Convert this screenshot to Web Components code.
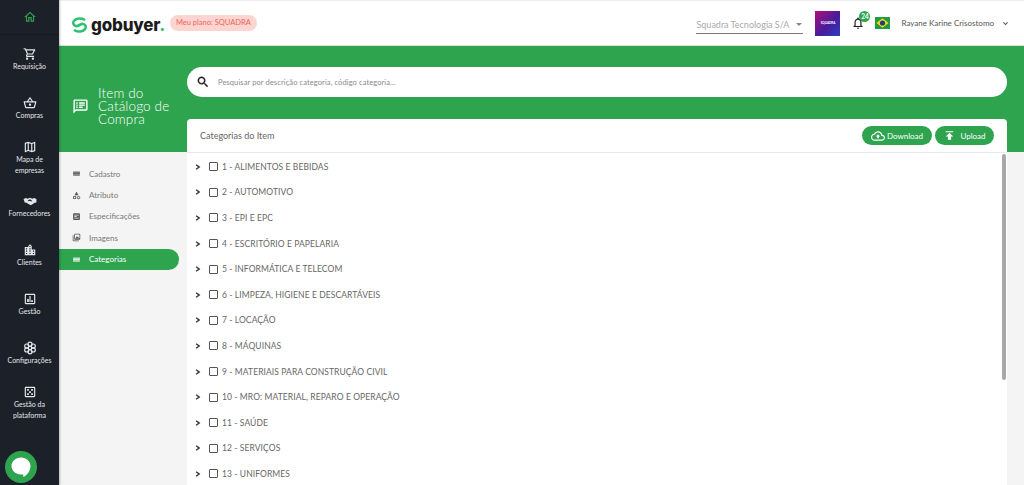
<!DOCTYPE html>
<html lang="pt">
<head>
<meta charset="utf-8">
<title>gobuyer</title>
<style>
    html, body {
        margin: 0;
        padding: 0;
        height: 485px;
        overflow: hidden;
        background: #f4f4f4;
        font-family: 'Lato', 'Open Sans', sans-serif;
    }
    .app {
        display: flex;
        height: 485px;
    }
    .main {
        flex: 1;
        min-width: 0;
        display: flex;
        flex-direction: column;
    }
</style>
</head>
<body>
<div class="app">
    <side-bar></side-bar>
    <div class="main">
        <top-bar></top-bar>
        <work-space></work-space>
    </div>
</div>
<chat-button></chat-button>

<script>
const ICONS = {
    home: '<path d="M12 5.69l5 4.5V18h-2v-6H9v6H7v-7.81l5-4.5M12 3L2 12h3v8h6v-6h2v6h6v-8h3L12 3z"/>',
    cart: '<path d="M15.55 13c.75 0 1.41-.41 1.75-1.03l3.58-6.49c.37-.66-.11-1.48-.87-1.48H5.21l-.94-2H1v2h2l3.6 7.59-1.35 2.44C4.52 15.37 5.48 17 7 17h12v-2H7l1.1-2h7.45zM6.16 6h12.15l-2.76 5H8.53L6.16 6zM7 18c-1.1 0-1.99.9-1.99 2S5.9 22 7 22s2-.9 2-2-.9-2-2-2zm10 0c-1.1 0-1.99.9-1.99 2s.89 2 1.99 2 2-.9 2-2-.9-2-2-2z"/>',
    basket: '<path d="M22 9h-4.79l-4.38-6.56c-.19-.28-.51-.42-.83-.42s-.64.14-.83.43L6.79 9H2c-.55 0-1 .45-1 1 0 .09.01.18.04.27l2.54 9.27c.23.84 1 1.46 1.92 1.46h13c.92 0 1.69-.62 1.93-1.46l2.54-9.27L23 10c0-.55-.45-1-1-1zM12 4.8L14.8 9H9.2L12 4.8zM18.5 19l-12.99.01L3.31 11H20.7l-2.2 8zM12 13c-1.1 0-2 .9-2 2s.9 2 2 2 2-.9 2-2-.9-2-2-2z"/>',
    map: '<path d="M20.5 3l-.16.03L15 5.1 9 3 3.36 4.9c-.21.07-.36.25-.36.48V20.5c0 .28.22.5.5.5l.16-.03L9 18.9l6 2.1 5.64-1.9c.21-.07.36-.25.36-.48V3.5c0-.28-.22-.5-.5-.5zM10 5.47l4 1.4v11.66l-4-1.4V5.47zm-5 .99l3-1.01v11.7l-3 1.16V6.46zm14 11.08l-3 1.01V6.86l3-1.16v11.84z"/>',
    hands: '<path d="M1 8.500 5 7l3 1 4-1.500 4 1.500 3-1 4 1.500v6l-3 .5-5 3.500-2 .5-3-1.500-4-2.500-3-.5z"/><path d="M8 11l4-2 4 3-2 1-2-1.500-2 1z" fill="#1c2029"/>',
    city: '<path d="M15 11V5l-3-3-3 3v2H3v14h18V11h-6zm-8 8H5v-2h2v2zm0-4H5v-2h2v2zm0-4H5V9h2v2zm6 8h-2v-2h2v2zm0-4h-2v-2h2v2zm0-4h-2V9h2v2zm0-4h-2V5h2v2zm6 12h-2v-2h2v2zm0-4h-2v-2h2v2z"/>',
    chart: '<path d="M19 3H5c-1.100 0-2 .9-2 2v14c0 1.100.9 2 2 2h14c1.100 0 2-.9 2-2V5c0-1.100-.9-2-2-2zm0 16H5V5h14v14zM7 12h3v5H7zm4-5h2v10h-2zm3 7h3v3h-3z"/>',
    gear: '<g fill="none" stroke="currentColor" stroke-width="2"><circle cx="12" cy="12" r="3"/><circle cx="12" cy="5.500" r="3.500"/><circle cx="12" cy="18.500" r="3.500"/><circle cx="6.400" cy="8.700" r="3.500"/><circle cx="17.600" cy="8.700" r="3.500"/><circle cx="6.400" cy="15.300" r="3.500"/><circle cx="17.600" cy="15.300" r="3.500"/></g>',
    platform: '<path d="M19 3H5c-1.100 0-2 .9-2 2v14c0 1.100.9 2 2 2h14c1.100 0 2-.9 2-2V5c0-1.100-.9-2-2-2zm0 16H5V5h14v14zM7 7h3v3H7zm7 0h3v3h-3zM7 14h3v3H7zm7 0h3v3h-3zm-3.500-3.500h3v3h-3z"/>',
    lines: '<path d="M3 7h18v2H3zm0 4h18v2H3zm0 4h18v2H3z"/><path d="M3 7h18v10H3z" opacity=".55"/>',
    category: '<path d="M12 2l-5.500 9h11L12 2zM17.500 13c-2.490 0-4.500 2.010-4.500 4.500s2.010 4.500 4.500 4.500 4.500-2.010 4.500-4.500-2.010-4.500-4.500-4.500zm0 7c-1.380 0-2.500-1.120-2.500-2.500s1.120-2.500 2.500-2.500 2.500 1.120 2.500 2.500-1.120 2.500-2.500 2.500zM3 21.500h8v-8H3v8zm2-6h4v4H5v-4z"/>',
    spec: '<path d="M19 3H5c-1.100 0-2 .9-2 2v14c0 1.100.9 2 2 2h14c1.100 0 2-.9 2-2V5c0-1.100-.9-2-2-2zM6 7h12v2H6zm0 4h7v2H6zm0 4h12v2H6z" fill-rule="evenodd"/>',
    photos: '<path d="M22 16V4c0-1.100-.9-2-2-2H8c-1.100 0-2 .9-2 2v12c0 1.100.9 2 2 2h12c1.100 0 2-.9 2-2zm-2-2H8V4h12v10zM2 6v14c0 1.100.9 2 2 2h14v-2H4V6H2z"/><path d="M10 13l3-5 2 3 1.500-1.500L18 13z"/>',
    search: '<path d="M15.500 14h-.79l-.28-.27C15.410 12.590 16 11.110 16 9.500 16 5.910 13.090 3 9.500 3S3 5.910 3 9.500 5.910 16 9.500 16c1.610 0 3.090-.59 4.230-1.570l.27.28v.79l5 4.990L20.490 19l-4.990-5zm-6 0C7.010 14 5 11.990 5 9.500S7.010 5 9.500 5 14 7.010 14 9.500 11.990 14 9.500 14z" stroke="currentColor" stroke-width=".6"/>',
    bell: '<path d="M12 22c1.100 0 2-.9 2-2h-4c0 1.100.9 2 2 2zm6-6v-5c0-3.070-1.630-5.640-4.500-6.320V4c0-.83-.67-1.500-1.500-1.500s-1.500.67-1.500 1.500v.68C7.640 5.360 6 7.920 6 11v5l-2 2v1h16v-1l-2-2zm-2 1H8v-6c0-2.480 1.510-4.500 4-4.500s4 2.020 4 4.500v6z"/>',
    cloud: '<path d="M19.350 10.040C18.670 6.590 15.640 4 12 4 9.110 4 6.600 5.640 5.350 8.040 2.340 8.360 0 10.910 0 14c0 3.310 2.690 6 6 6h13c2.760 0 5-2.240 5-5 0-2.640-2.050-4.780-4.650-4.960zM19 18H6c-2.210 0-4-1.790-4-4 0-2.050 1.530-3.760 3.560-3.970l1.070-.11.5-.95C8.080 7.140 9.940 6 12 6c2.620 0 4.880 1.860 5.390 4.430l.3 1.500 1.530.11c1.560.1 2.780 1.410 2.780 2.960 0 1.650-1.350 3-3 3zM8 13h2.550v3h2.900v-3H16l-4-4z"/>',
    publish: '<path d="M5 4v2h14V4H5zm0 10h4v6h6v-6h4l-7-7-7 7z"/>',
    note: '<path d="M20 2H4c-1.100 0-2 .9-2 2v18l4-4h14c1.100 0 2-.9 2-2V4c0-1.100-.9-2-2-2zm0 14H5.170L4 17.170V4h16v12zM6 12h2v2H6zm0-3h2v2H6zm0-3h2v2H6zm4 6h5v2h-5zm0-3h8v2h-8zm0-3h8v2h-8z"/>'
};

function icon(name, size) {
    return `<svg viewBox="0 0 24 24" width="${size}" height="${size}" fill="currentColor" aria-hidden="true">${ICONS[name]}</svg>`;
}

class SideBar extends HTMLElement {
    constructor() {
        super();
        this.attachShadow({ mode: 'open' });
    }

    connectedCallback() {
        const items = [
            { label: 'Requisição', icon: 'cart' },
            { label: 'Compras', icon: 'basket' },
            { label: 'Mapa de<br>empresas', icon: 'map' },
            { label: 'Fornecedores', icon: 'hands' },
            { label: 'Clientes', icon: 'city' },
            { label: 'Gestão', icon: 'chart' },
            { label: 'Configurações', icon: 'gear' },
            { label: 'Gestão da<br>plataforma', icon: 'platform' }
        ];
        let itemsHTML = '';
        for (let item of items) {
            itemsHTML += `<a class="item">${icon(item.icon, 14)}<span>${item.label}</span></a>`;
        }
        this.shadowRoot.innerHTML = `
        <style>
            :host {
                display: flex;
                flex-direction: column;
                flex: none;
                width: 59px;
                background-color: #1c2029;
                color: #e4e6ea;
                box-shadow: 1px 0 2px rgba(0, 0, 0, .25);
                z-index: 2;
            }
            .home {
                display: flex;
                align-items: center;
                justify-content: center;
                height: 35px;
                border-bottom: 1px solid #171a22;
                box-sizing: border-box;
                color: #2ea44f;
            }
            .item {
                display: flex;
                flex-direction: column;
                align-items: center;
                justify-content: center;
                height: 49px;
                font-size: 7px;
                line-height: 10.500px;
                text-align: center;
                white-space: nowrap;
            }
        </style>
        <div class="home">${icon('home', 14)}</div>
        ${itemsHTML}
        `;
    }
}

class TopBar extends HTMLElement {
    constructor() {
        super();
        this.attachShadow({ mode: 'open' });
    }

    connectedCallback() {
        this.shadowRoot.innerHTML = `
        <style>
            :host {
                display: flex;
                align-items: center;
                flex: none;
                height: 46px;
                box-sizing: border-box;
                padding: 0 15px 0 12px;
                background-color: #fff;
                border-top: 1px solid #eee;
                border-bottom: 1px solid #dcdcdc;
                color: #666;
            }
            .logo {
                display: flex;
                align-items: center;
                gap: 3px;
                margin-top: 3px;
                font-family: 'Inter', sans-serif;
                font-size: 17px;
                font-weight: 800;
                letter-spacing: -.2px;
                color: #1b1b1b;
            }
            .logo b { color: #2fc274; font-weight: 800; }
            .plan {
                margin-left: 5px;
                padding: 0 6px;
                height: 16px;
                line-height: 16px;
                border-radius: 8px;
                background-color: #fdd5d0;
                color: #e9645c;
                font-size: 7.500px;
            }
            .spacer { flex: 1; }
            .company {
                display: flex;
                align-items: center;
                justify-content: space-between;
                box-sizing: border-box;
                width: 107px;
                height: 22px;
                padding-top: 3px;
                border-bottom: 1px solid #777;
                color: #aaa;
                font-size: 9px;
            }
            .company i {
                width: 0;
                height: 0;
                margin-right: 1px;
                border: 3px solid transparent;
                border-top: 3px solid #888;
                border-bottom: 0;
            }
            .brand {
                display: flex;
                align-items: center;
                justify-content: center;
                width: 25px;
                height: 25px;
                margin-left: 12px;
                background: linear-gradient(135deg, #b0107a 0%, #4a1a9c 55%, #2a3fc0 100%);
                color: #fff;
                font-size: 3px;
                font-weight: 700;
            }
            .bell {
                position: relative;
                display: flex;
                margin: -1px 0 0 11px;
                color: #222;
            }
            .badge {
                position: absolute;
                top: -5px;
                left: 8px;
                width: 11px;
                height: 11px;
                line-height: 11px;
                border-radius: 50%;
                background-color: #2ea44f;
                color: #fff;
                font-size: 6.500px;
                font-weight: 700;
                text-align: center;
            }
            .flag { display: block; margin-left: 10px; }
            .user {
                margin-left: 11px;
                font-size: 8px;
                color: #555;
            }
            .caret { display: flex; margin-left: 8px; color: #555; }
        </style>
        <div class="logo">
            <svg viewBox="0 0 18 18" width="17" height="18" fill="none" stroke="#2fc274" stroke-width="2.700" stroke-linecap="round" stroke-linejoin="round">
                <path d="M14 3.200C11 1.500 5 1.500 2.800 5 1.500 7.500 3 10 6 10.300L9 9"/>
                <path d="M4 14.800c3 1.700 9 1.700 11.200-1.800 1.300-2.500-.2-5-3.200-5.300L9 9"/>
            </svg>
            <span>gobuyer<b>.</b></span>
        </div>
        <span class="plan">Meu plano: SQUADRA</span>
        <span class="spacer"></span>
        <div class="company"><span>Squadra Tecnologia S/A</span><i></i></div>
        <div class="brand">SQUADRA</div>
        <div class="bell">${icon('bell', 14)}<span class="badge">24</span></div>
        <svg class="flag" viewBox="0 0 15 12" width="15" height="12">
            <rect width="15" height="12" fill="#1f9a45"/>
            <path d="M7.500 1.300 13.700 6 7.500 10.700 1.300 6z" fill="#f5d90a"/>
            <circle cx="7.500" cy="6" r="2.600" fill="#1d3f8f"/>
        </svg>
        <span class="user">Rayane Karine Crisostomo</span>
        <span class="caret"><svg viewBox="0 0 10 10" width="7" height="7" fill="none" stroke="currentColor" stroke-width="1.500"><path d="M2 3.500l3 3 3-3"/></svg></span>
        `;
    }
}

class WorkSpace extends HTMLElement {
    constructor() {
        super();
        this.attachShadow({ mode: 'open' });
    }

    connectedCallback() {
        this.shadowRoot.innerHTML = `
        <style>
            :host {
                display: flex;
                flex: 1;
                min-height: 0;
                background: linear-gradient(#2ea44f 106px, #f4f4f4 106px);
            }
            .left {
                flex: none;
                width: 128px;
            }
            .title {
                display: flex;
                align-items: center;
                gap: 9px;
                box-sizing: border-box;
                height: 106px;
                padding: 14px 0 0 13px;
                color: #fff;
            }
            .title svg { flex: none; }
            .title h1 {
                margin: 0;
                font-size: 13.500px;
                font-weight: 300;
                line-height: 13px;
                letter-spacing: .15px;
            }
            .right {
                flex: 1;
                min-width: 0;
                display: flex;
                flex-direction: column;
                gap: 22px;
                padding: 21px 17px 0 0;
            }
        </style>
        <div class="left">
            <div class="title">${icon('note', 17)}<h1>Item do Catálogo de Compra</h1></div>
            <side-nav></side-nav>
        </div>
        <div class="right">
            <search-box placeholder="Pesquisar por descrição categoria, código categoria..."></search-box>
            <category-card></category-card>
        </div>
        `;
    }
}

class SideNav extends HTMLElement {
    constructor() {
        super();
        this.attachShadow({ mode: 'open' });
    }

    connectedCallback() {
        const links = [
            { name: 'Cadastro', icon: 'lines' },
            { name: 'Atributo', icon: 'category' },
            { name: 'Especificações', icon: 'spec' },
            { name: 'Imagens', icon: 'photos' },
            { name: 'Categorias', icon: 'lines', active: true }
        ];
        let linksHTML = '';
        for (let link of links) {
            linksHTML += `<a class="link ${link.active ? 'active' : ''}">${icon(link.icon, 9)}<span>${link.name}</span></a>`;
        }
        this.shadowRoot.innerHTML = `
        <style>
            :host {
                display: block;
                padding: 11px 8px 0 0;
            }
            .link {
                display: flex;
                align-items: center;
                gap: 8px;
                height: 21.400px;
                padding-left: 13px;
                font-size: 8px;
                color: #777;
            }
            .link svg { color: #555; }
            .active {
                border-radius: 0 11px 11px 0;
                background-color: #2ea44f;
                color: #fff;
            }
            .active svg { color: #e8f5ec; }
        </style>
        ${linksHTML}
        `;
    }
}

class SearchBox extends HTMLElement {
    constructor() {
        super();
        this.attachShadow({ mode: 'open' });
    }

    connectedCallback() {
        this.shadowRoot.innerHTML = `
        <style>
            :host {
                display: flex;
                align-items: center;
                flex: none;
                gap: 8px;
                height: 30px;
                padding-left: 9px;
                border-radius: 15px;
                background-color: #fff;
                color: #222;
            }
            span {
                font-size: 7.500px;
                letter-spacing: .1px;
                color: #8a8a8a;
            }
        </style>
        ${icon('search', 14)}
        <span>${this.getAttribute('placeholder')}</span>
        `;
    }
}

class CategoryCard extends HTMLElement {
    constructor() {
        super();
        this.attachShadow({ mode: 'open' });
    }

    connectedCallback() {
        const categories = [
            '1 - ALIMENTOS E BEBIDAS',
            '2 - AUTOMOTIVO',
            '3 - EPI E EPC',
            '4 - ESCRITÓRIO E PAPELARIA',
            '5 - INFORMÁTICA E TELECOM',
            '6 - LIMPEZA, HIGIENE E DESCARTÁVEIS',
            '7 - LOCAÇÃO',
            '8 - MÁQUINAS',
            '9 - MATERIAIS PARA CONSTRUÇÃO CIVIL',
            '10 - MRO: MATERIAL, REPARO E OPERAÇÃO',
            '11 - SAÚDE',
            '12 - SERVIÇOS',
            '13 - UNIFORMES'
        ];
        let rows = '';
        for (let name of categories) {
            rows += `<tree-row>${name}</tree-row>`;
        }
        this.shadowRoot.innerHTML = `
        <style>
            :host {
                position: relative;
                display: flex;
                flex-direction: column;
                flex: 1;
                min-height: 0;
                border-radius: 4px 4px 0 0;
                background-color: #fff;
                overflow: hidden;
            }
            header {
                display: flex;
                align-items: center;
                justify-content: space-between;
                flex: none;
                box-sizing: border-box;
                height: 34px;
                padding: 0 13px;
                border-bottom: 1px solid #e8e8e8;
            }
            .heading {
                font-size: 9px;
                color: #666;
            }
            .actions { display: flex; gap: 3px; }
            button {
                display: flex;
                align-items: center;
                justify-content: center;
                gap: 2px;
                height: 19px;
                padding: 0;
                border: none;
                border-radius: 10px;
                background-color: #2ea44f;
                color: #fff;
                font-family: inherit;
                font-size: 8px;
            }
            .down { width: 70px; }
            .up { width: 59px; gap: 4px; }
            .rows { padding-top: 1px; }
            .thumb {
                position: absolute;
                top: 35px;
                right: 1px;
                width: 4px;
                height: 226px;
                border-radius: 2px;
                background-color: #a8a8a8;
            }
        </style>
        <header>
            <span class="heading">Categorias do Item</span>
            <div class="actions">
                <button class="down">${icon('cloud', 14)}Download</button>
                <button class="up">${icon('publish', 13)}Upload</button>
            </div>
        </header>
        <div class="rows">${rows}</div>
        <div class="thumb"></div>
        `;
    }
}

class TreeRow extends HTMLElement {
    constructor() {
        super();
        this.attachShadow({ mode: 'open' });
    }

    connectedCallback() {
        this.shadowRoot.innerHTML = `
        <style>
            :host {
                display: flex;
                align-items: center;
                height: 25.600px;
                padding-left: 8px;
                font-size: 8.500px;
                letter-spacing: .09px;
                color: #666;
            }
            svg { flex: none; }
            .box {
                flex: none;
                box-sizing: border-box;
                width: 9px;
                height: 9px;
                margin: 0 4px 0 8px;
                border: 1px solid #555;
                border-radius: 1px;
            }
        </style>
        <svg viewBox="0 0 8 8" width="6" height="8" fill="none" stroke="#333" stroke-width="2"><path d="M1.500 1 5.500 4 1.500 7"/></svg>
        <span class="box"></span>
        <slot></slot>
        `;
    }
}

class ChatButton extends HTMLElement {
    constructor() {
        super();
        this.attachShadow({ mode: 'open' });
    }

    connectedCallback() {
        this.shadowRoot.innerHTML = `
        <style>
            :host {
                position: absolute;
                left: 5px;
                top: 451px;
                display: flex;
                align-items: center;
                justify-content: center;
                width: 32px;
                height: 32px;
                border-radius: 50%;
                background-color: #2ea44f;
                z-index: 3;
            }
        </style>
        <svg viewBox="0 0 20 20" width="20" height="20"><path d="M10 .5C4.700.5.500 4.300.5 9s4.200 8.500 9.500 8.500c.7 0 1.400 0 2-.2L12.500 20c3-1.500 7-5.500 7-11C19.500 4.300 15.300.5 10 .5z" fill="#fff"/></svg>
        `;
    }
}

customElements.define('side-bar', SideBar);
customElements.define('top-bar', TopBar);
customElements.define('work-space', WorkSpace);
customElements.define('side-nav', SideNav);
customElements.define('search-box', SearchBox);
customElements.define('category-card', CategoryCard);
customElements.define('tree-row', TreeRow);
customElements.define('chat-button', ChatButton);
</script>
</body>
</html>
